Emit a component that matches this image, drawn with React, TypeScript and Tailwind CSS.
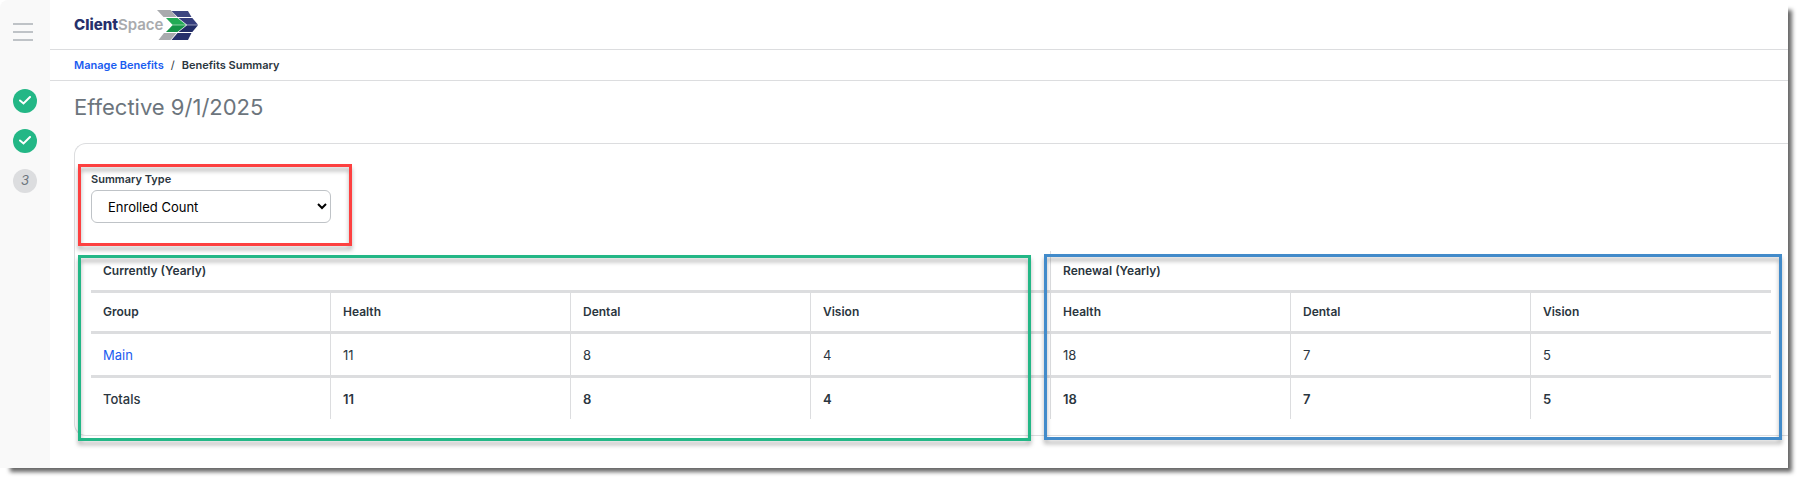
import React, { useState } from "react";

interface Step {
  id: number;
  done: boolean;
}

const steps: Step[] = [
  { id: 1, done: true },
  { id: 2, done: true },
  { id: 3, done: false },
];

const plans = ["Health", "Dental", "Vision"];
const current = [11, 8, 4];
const renewal = [18, 7, 5];

const cell = "border-[#dcdddf] px-3 text-left [&:not(:last-child)]:border-r";

function Logo() {
  return (
    <a href="#" aria-label="ClientSpace" className="flex items-center">
      <span className="text-[15px] font-extrabold leading-5 text-[#26306b]">
        Client
      </span>
      <span className="text-[15px] font-semibold leading-5 text-[#a9abae]">
        Space
      </span>
      <svg className="-ml-[6px] h-[30px] w-[41px]" viewBox="0 0 41 30">
        <path d="M0 0H13.5L19.5 7H6.5z" fill="#a9abae" />
        <path d="M9 8H20.500L29 14.800H15.500z" fill="#22ab55" />
        <path d="M15.500 15.300H29L20.500 22H9z" fill="#149447" />
        <path d="M7 23H19.500L13.500 30H1.500z" fill="#a9abae" />
        <path d="M14.500 1H31L34.500 7H20.500z" fill="#3d4680" />
        <path d="M21.500 8H35.300L41 14.800H30z" fill="#343d7c" />
        <path d="M30 15.300H41L35.300 22H21.500z" fill="#212c66" />
        <path d="M20.500 23H34.500L31 30H14.500z" fill="#26306b" />
      </svg>
    </a>
  );
}

function Sidebar() {
  return (
    <aside className="flex w-[50px] shrink-0 flex-col items-center rounded-tl-lg bg-[#f9f9f9] pt-[23px]">
      <button
        type="button"
        aria-label="Open menu"
        className="mb-12 mr-1 flex w-5 flex-col gap-[6px]"
      >
        <span className="h-[2px] w-full bg-[#bfc3c7]" />
        <span className="h-[2px] w-full bg-[#bfc3c7]" />
        <span className="h-[2px] w-full bg-[#bfc3c7]" />
      </button>
      <ol className="flex flex-col gap-4">
        {steps.map((step) => (
          <li
            key={step.id}
            className={`flex size-6 items-center justify-center rounded-full ${
              step.done ? "bg-[#23b786]" : "bg-[#dcdddf]"
            }`}
          >
            {step.done ? (
              <svg className="mb-[2px] h-[9px] w-3" viewBox="0 0 12 9" fill="none">
                <path
                  d="M1 4.500L4.500 7.500L11 1"
                  stroke="#fff"
                  strokeWidth="2"
                  strokeLinecap="round"
                />
              </svg>
            ) : (
              <span className="text-[13px] italic text-[#6c757d]">{step.id}</span>
            )}
          </li>
        ))}
      </ol>
    </aside>
  );
}

function SummaryTable() {
  return (
    <table className="w-full table-fixed border-separate border-spacing-0">
      <thead className="text-xs leading-4">
        <tr className="h-[42px]">
          <th colSpan={4} className={`${cell} border-b-3 font-semibold`}>
            Currently (Yearly)
          </th>
          <th colSpan={3} className={`${cell} border-b-3 font-semibold`}>
            Renewal (Yearly)
          </th>
        </tr>
        <tr className="h-[41px]">
          {["Group", ...plans, ...plans].map((name, i) => (
            <th key={i} className={`${cell} border-b-3 font-semibold`}>
              {name}
            </th>
          ))}
        </tr>
      </thead>
      <tbody className="text-[13px] leading-5">
        <tr className="h-[44px]">
          <td className={`${cell} border-b-3`}>
            <a href="#" className="text-[#1a5cf0]">
              Main
            </a>
          </td>
          {[...current, ...renewal].map((count, i) => (
            <td key={i} className={`${cell} border-b-3`}>
              {count}
            </td>
          ))}
        </tr>
        <tr className="h-[41px]">
          <th className={`${cell} font-medium`}>Totals</th>
          {[...current, ...renewal].map((count, i) => (
            <td key={i} className={`${cell} font-semibold`}>
              {count}
            </td>
          ))}
        </tr>
      </tbody>
    </table>
  );
}

export default function App() {
  const [summaryType, setSummaryType] = useState("enrolled");

  return (
    <div className="bg-white pb-[15px] pr-[15px] font-['Inter',sans-serif] text-[#2b3640]">
      <div className="flex rounded-tl-lg bg-white shadow-[7px_7px_4px_-3px_rgba(0,0,0,0.6)]">
        <Sidebar />

        <div className="min-w-0 flex-1">
          <header className="flex h-[50px] items-center border-b border-[#dcdddf] pl-6">
            <Logo />
          </header>

          <nav
            aria-label="Breadcrumb"
            className="flex h-[31px] items-center gap-[7px] border-b border-[#dcdddf] pl-6 text-[11px] font-semibold"
          >
            <a href="#" className="text-[#1a5cf0]">
              Manage Benefits
            </a>
            <span className="font-normal">/</span>
            <span>Benefits Summary</span>
          </nav>

          <main className="pb-8 pl-6">
            <h1 className="pb-5 pt-[10px] text-[22px] leading-8 text-[#6c757d]">
              Effective 9/1/2025
            </h1>

            <section className="rounded-l-xl border border-r-0 border-[#dcdddf] pb-4 pl-4 pr-[17px] pt-5">
              <div className="relative w-60">
                <label
                  htmlFor="summary-type"
                  className="block pb-[3px] pt-[7px] text-[11px] font-semibold leading-4"
                >
                  Summary Type
                </label>
                <select
                  id="summary-type"
                  value={summaryType}
                  onChange={(e) => setSummaryType(e.target.value)}
                  className="h-[33px] w-full rounded-md border border-[#bfc3c7] bg-white pl-3 text-[13px] text-black"
                >
                  <option value="enrolled">Enrolled Count</option>
                  <option value="premium">Premium</option>
                </select>
                <div className="pointer-events-none absolute -bottom-[23px] -left-[13px] -right-[21px] top-0 border-3 border-[#fd4040] drop-shadow-[0_4px_2px_rgba(0,0,0,0.3)]" />
              </div>

              <div className="relative mt-7">
                <SummaryTable />
                <div className="pointer-events-none absolute -bottom-[22px] -left-[13px] right-[calc(300%/7+20px)] top-[4px] border-3 border-[#23b786] drop-shadow-[0_4px_2px_rgba(0,0,0,0.3)]" />
                <div className="pointer-events-none absolute -bottom-[21px] -right-[11px] left-[calc(400%/7-7px)] top-[3px] border-3 border-[#428bca] drop-shadow-[0_4px_2px_rgba(0,0,0,0.3)]" />
              </div>
            </section>
          </main>
        </div>
      </div>
    </div>
  );
}
